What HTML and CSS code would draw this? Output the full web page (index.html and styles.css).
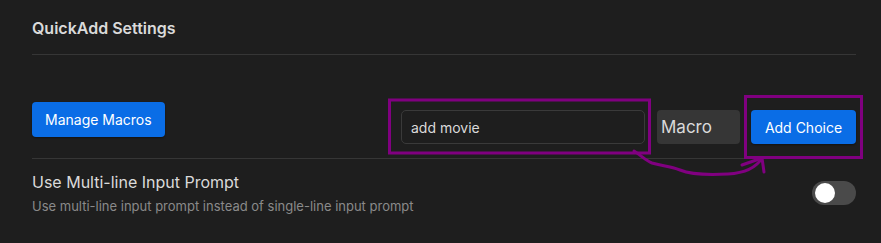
FILE: index.html
```html
<!DOCTYPE html>
<html lang="en">
<head>
    <meta charset="UTF-8">
    <meta name="viewport" content="width=device-width, initial-scale=1.0">
    <title>QuickAdd Settings</title>
    <link rel="stylesheet" href="styles.css">
</head>
<body>
    <div class="container">
        <h2 class="heading">QuickAdd Settings</h2>

        <div class="choice-row">
            <button class="btn">Manage Macros</button>
            <div class="add-group">
                <input class="choice-input" type="text" value="add movie">
                <div class="choice-type">Macro</div>
                <button class="btn btn-add">Add Choice</button>
            </div>
        </div>

        <div class="setting-item">
            <div class="setting-info">
                <div class="setting-name">Use Multi-line Input Prompt</div>
                <div class="setting-desc">Use multi-line input prompt instead of single-line input prompt</div>
            </div>
            <div class="toggle"><span class="knob"></span></div>
        </div>

        <!-- hand-drawn annotation on top of the screenshot -->
        <svg class="marks" width="881" height="243" viewBox="0 0 881 243">
            <rect x="389.5" y="100" width="260" height="53" fill="none" stroke="#800080" stroke-width="3"/>
            <rect x="745.5" y="96.5" width="116" height="61" fill="none" stroke="#800080" stroke-width="3"/>
            <path d="M634 151 C642 156 646 161 652 163 C662 166 670 166 680 170 C692 175 710 175 728 174 C745 173 756 168 762 158"
                  fill="none" stroke="#800080" stroke-width="3" stroke-linecap="round"/>
            <path d="M742 165 L762 158 L764 172" fill="none" stroke="#800080" stroke-width="3" stroke-linecap="round" stroke-linejoin="round"/>
        </svg>
    </div>
</body>
</html>
```

FILE: styles.css
```css
html, body {
    margin: 0;
    background-color: #1e1e1e;
}
body {
    font-family: Inter, "Noto Sans", sans-serif;
    color: #dadada;
}
.container {
    position: relative;
    padding: 16px 25px 0 32px;
    height: 227px;
}
.heading {
    margin: 0;
    font-size: 16px;
    font-weight: 600;
    line-height: 24px;
    padding-bottom: 14px;
    border-bottom: 1px solid #363636;
}
.choice-row {
    display: flex;
    justify-content: space-between;
    align-items: flex-start;
    padding: 47px 0 14px;
    border-bottom: 1px solid #363636;
}
.btn {
    font-family: inherit;
    font-size: 14px;
    color: #fff;
    background-color: #0a6de6;
    border: none;
    border-radius: 4px;
    padding: 0 13px;
    height: 35px;
    box-shadow: 0 1px 2px rgba(0, 0, 0, 0.4);
}
.add-group {
    display: flex;
    align-items: center;
    gap: 11px;
    margin-top: 8px;
}
.choice-input {
    box-sizing: border-box;
    width: 244px;
    height: 34px;
    margin-right: 1px;
    padding: 0 9px;
    font-family: inherit;
    font-size: 14px;
    color: #dadada;
    background-color: #1e1e1e;
    border: 1px solid #3a3a3a;
    border-radius: 5px;
}
.choice-type {
    box-sizing: border-box;
    width: 83px;
    height: 34px;
    line-height: 34px;
    padding-left: 4px;
    font-size: 17px;
    color: #dadada;
    background-color: #363636;
    border-radius: 4px;
}
.btn-add {
    width: 105px;
    height: 34px;
    padding: 0;
}
.setting-item {
    display: flex;
    justify-content: space-between;
    align-items: center;
    padding: 12px 0;
}
.setting-name {
    font-size: 16px;
    line-height: 22px;
}
.setting-desc {
    font-size: 13px;
    line-height: 20px;
    margin-top: 3px;
    color: #8a8a8a;
}
.toggle {
    position: relative;
    width: 44px;
    height: 24px;
    border-radius: 12px;
    background-color: #4a4a4a;
    margin-bottom: 2px;
}
.knob {
    position: absolute;
    left: 3px;
    top: 2px;
    width: 20px;
    height: 20px;
    border-radius: 50%;
    background-color: #fff;
}
.marks {
    position: absolute;
    left: 0;
    top: 0;
    pointer-events: none;
}
```
